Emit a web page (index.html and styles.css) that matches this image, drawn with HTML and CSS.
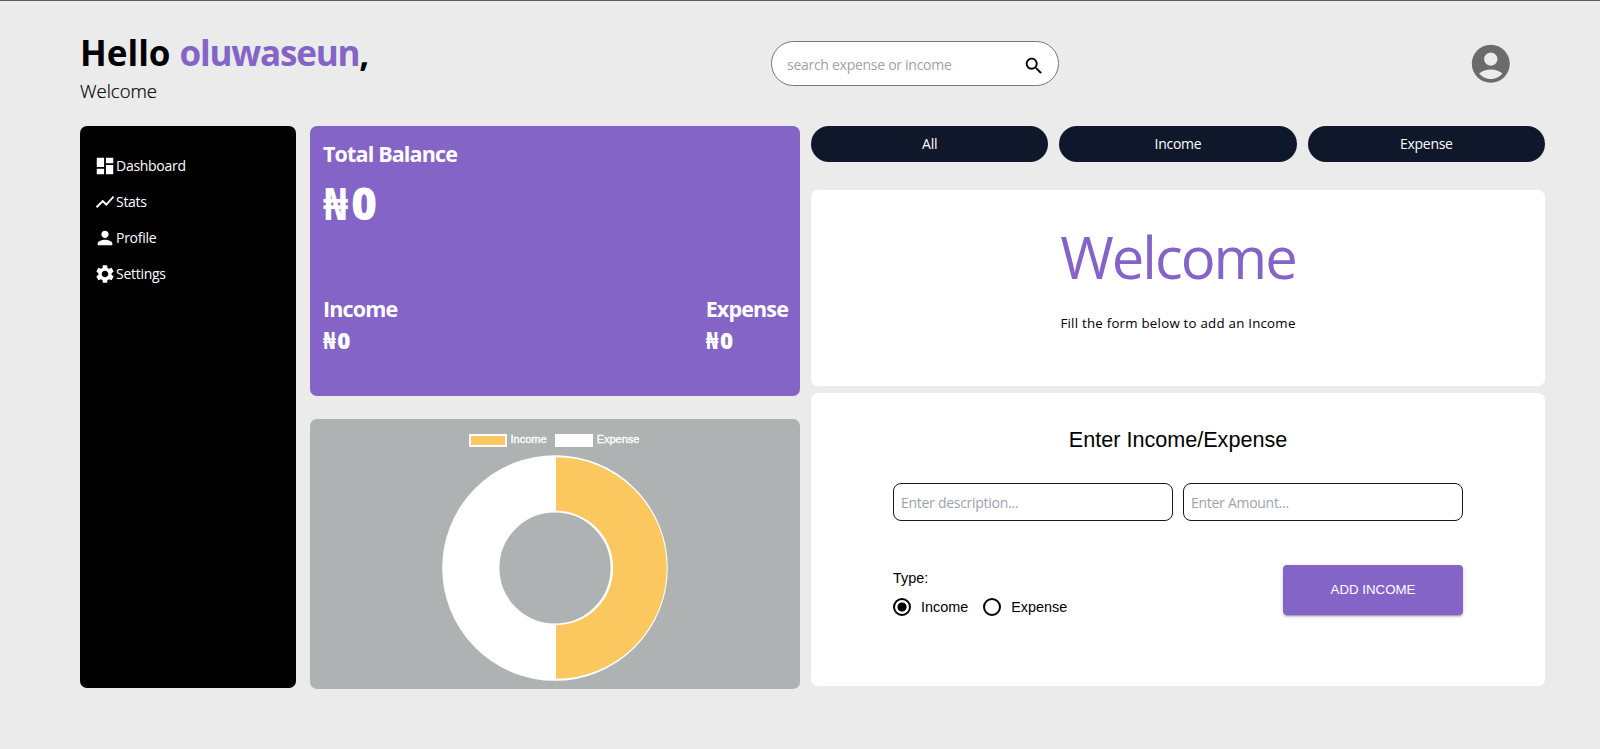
FILE: index.html
```html
<!DOCTYPE html>
<html lang="en">
<head>
<meta charset="utf-8">
<title>Expense Tracker</title>
<link rel="stylesheet" href="styles.css">
</head>
<body>
<div class="page">
  <header class="header">
    <div class="greeting">
      <h1 class="hello">Hello <span class="accent">oluwaseun</span>,</h1>
      <p class="sub">Welcome</p>
    </div>
    <div class="search">
      <span class="search-text">search expense or income</span>
      <svg class="search-icon" viewBox="0 0 24 24"><path d="M15.5 14h-.79l-.28-.27C15.41 12.59 16 11.11 16 9.5 16 5.91 13.09 3 9.5 3S3 5.91 3 9.5 5.91 16 9.5 16c1.61 0 3.09-.59 4.23-1.57l.27.28v.79l5 4.99L20.49 19l-4.99-5zm-6 0C7.01 14 5 11.99 5 9.5S7.01 5 9.5 5 14 7.01 14 9.5 11.99 14 9.5 14z"/></svg>
    </div>
    <svg class="avatar" viewBox="0 0 24 24"><path d="M12 2C6.48 2 2 6.48 2 12s4.48 10 10 10 10-4.48 10-10S17.52 2 12 2zm0 4c1.93 0 3.5 1.57 3.5 3.5S13.93 13 12 13s-3.5-1.57-3.5-3.5S10.07 6 12 6zm0 14c-2.03 0-4.43-.82-6.14-2.88C7.55 15.8 9.68 15 12 15s4.45.8 6.14 2.12C16.43 19.18 14.03 20 12 20z"/></svg>
  </header>
  <main class="main">
    <nav class="sidebar">
      <a class="nav-item"><svg class="nav-icon" viewBox="0 0 24 24"><path d="M3 13h8V3H3v10zm0 8h8v-6H3v6zm10 0h8V11h-8v10zm0-18v6h8V3h-8z"/></svg><span class="nav-text">Dashboard</span></a>
      <a class="nav-item"><svg class="nav-icon" viewBox="0 0 24 24"><path d="m3.5 18.49 6-6.01 4 4L22 6.92l-1.41-1.41-7.09 7.97-4-4L2 16.99z"/></svg><span class="nav-text">Stats</span></a>
      <a class="nav-item"><svg class="nav-icon" viewBox="0 0 24 24"><path d="M12 12c2.21 0 4-1.79 4-4s-1.79-4-4-4-4 1.79-4 4 1.79 4 4 4zm0 2c-2.67 0-8 1.34-8 4v2h16v-2c0-2.66-5.33-4-8-4z"/></svg><span class="nav-text">Profile</span></a>
      <a class="nav-item"><svg class="nav-icon" viewBox="0 0 24 24"><path d="M19.14 12.94c.04-.3.06-.61.06-.94 0-.32-.02-.64-.07-.94l2.03-1.58c.18-.14.23-.41.12-.61l-1.92-3.32c-.12-.22-.37-.29-.59-.22l-2.39.96c-.5-.38-1.03-.7-1.62-.94l-.36-2.54c-.04-.24-.24-.41-.48-.41h-3.84c-.24 0-.43.17-.47.41l-.36 2.54c-.59.24-1.13.57-1.62.94l-2.39-.96c-.22-.08-.47 0-.59.22L2.74 8.87c-.12.21-.08.47.12.61l2.03 1.58c-.05.3-.09.63-.09.94s.02.64.07.94l-2.03 1.58c-.18.14-.23.41-.12.61l1.92 3.32c.12.22.37.29.59.22l2.39-.96c.5.38 1.03.7 1.62.94l.36 2.54c.05.24.24.41.48.41h3.84c.24 0 .44-.17.47-.41l.36-2.54c.59-.24 1.13-.56 1.62-.94l2.39.96c.22.08.47 0 .59-.22l1.92-3.32c.12-.22.07-.47-.12-.61l-2.01-1.58zM12 15.6c-1.98 0-3.6-1.62-3.6-3.6s1.62-3.6 3.6-3.6 3.6 1.62 3.6 3.6-1.62 3.6-3.6 3.6z"/></svg><span class="nav-text">Settings</span></a>
    </nav>
    <section class="overview">
      <div class="balance">
        <h2 class="label">Total Balance</h2>
        <div class="total">₦0</div>
        <div class="split">
          <div><div class="label">Income</div><div class="label naira">₦0</div></div>
          <div><div class="label">Expense</div><div class="label naira">₦0</div></div>
        </div>
      </div>
      <div class="chart">
        <div class="legend">
          <span class="swatch swatch-income"></span><span class="legend-text">Income</span>
          <span class="swatch"></span><span class="legend-text">Expense</span>
        </div>
        <svg class="donut" viewBox="-113 -113 226 226">
          <circle r="84.2" fill="none" stroke="#fff" stroke-width="57.2"/>
          <path d="M1-110.8A110.8 110.8 0 0 1 1 110.8V57.2A57.2 57.2 0 0 0 1-57.2z" fill="#fac85f"/>
        </svg>
      </div>
    </section>
    <section class="entry">
      <div class="tabs">
        <button class="tab">All</button>
        <button class="tab">Income</button>
        <button class="tab">Expense</button>
      </div>
      <div class="welcome">
        <div class="welcome-title">Welcome</div>
        <div class="welcome-text">Fill the form below to add an Income</div>
      </div>
      <form class="form">
        <div class="form-title">Enter Income/Expense</div>
        <div class="fields">
          <div class="field">Enter description...</div>
          <div class="field">Enter Amount...</div>
        </div>
        <div class="form-foot">
          <div>
            <div class="type-label">Type:</div>
            <div class="radios">
              <label class="radio"><i class="dot dot-on"></i>Income</label>
              <label class="radio"><i class="dot"></i>Expense</label>
            </div>
          </div>
          <button type="button" class="add">ADD INCOME</button>
        </div>
      </form>
    </section>
  </main>
</div>
</body>
</html>
```

FILE: styles.css
```css
* { box-sizing: border-box; }

body {
  margin: 0;
  background: #ebebeb;
  color: #000;
  font-family: "Open Sans", "Noto Sans", sans-serif;
  font-size: 14px;
  letter-spacing: -0.28px;
}

h1, h2, p { margin: 0; }

button {
  border: 0;
  padding: 0;
  font: inherit;
  letter-spacing: inherit;
}

.page {
  border-top: 1px solid #5f5a60;
  padding: 32px 55px 0 80px;
}

.header {
  display: flex;
  align-items: flex-start;
  height: 93px;
}

.greeting { width: 691px; }

.hello {
  font-size: 35px;
  line-height: 40px;
  font-weight: 700;
  letter-spacing: 0;
}

.accent {
  color: #8564c7;
  letter-spacing: -1.2px;
}

.sub {
  margin-top: 4px;
  font-size: 18.5px;
  line-height: 28px;
  font-weight: 300;
  letter-spacing: 0;
  -webkit-text-stroke: 0.2px #000;
}

.search {
  display: flex;
  align-items: center;
  justify-content: space-between;
  width: 288px;
  height: 45px;
  margin-top: 8px;
  padding: 2px 13px 0 15px;
  border: 1px solid #777;
  border-radius: 23px;
  background: #fff;
}

.search-text { color: #9ca3af; }

.search-icon {
  width: 22px;
  height: 22px;
  margin-top: 2px;
}

.avatar {
  width: 45.6px;
  height: 45.6px;
  margin: 7.5px 0 0 408.7px;
  fill: #6b6b6b;
}

.main {
  display: flex;
  align-items: flex-start;
}

.sidebar {
  width: 216px;
  height: 562px;
  padding: 22px 14px;
  border-radius: 7px;
  background: #000;
  color: #fff;
}

.nav-item {
  display: flex;
  align-items: center;
  height: 36px;
}

.nav-text { padding-bottom: 2px; }

.nav-icon {
  width: 22px;
  height: 22px;
  fill: #fff;
}

.overview {
  display: flex;
  flex-direction: column;
  gap: 23px;
  width: 490px;
  margin: 0 11px 0 14px;
}

.balance {
  height: 270px;
  padding: 12px 12px 0 13px;
  border-radius: 7px;
  background: #8564c7;
  color: #fff;
}

.label {
  font-size: 21.5px;
  line-height: 32px;
  font-weight: 700;
  letter-spacing: -0.85px;
}

.total {
  margin-top: 3px;
  font-size: 44px;
  line-height: 60px;
  font-weight: 800;
  letter-spacing: 3px;
}

.naira {
  font-size: 22.4px;
  font-weight: 800;
  letter-spacing: 1.5px;
}

.split {
  display: flex;
  justify-content: space-between;
  margin-top: 60px;
}

.chart {
  display: flex;
  flex-direction: column;
  align-items: center;
  height: 270px;
  padding-top: 15px;
  border-radius: 7px;
  background: #aeb2b3;
}

.legend {
  display: flex;
  height: 13px;
  margin-right: 2px;
}

.swatch {
  width: 38px;
  height: 13px;
  border: 2px solid #fff;
  background: #fff;
}

.swatch-income { background: #fac85f; }

.legend-text {
  margin: 0 8px 0 4px;
  color: #fff;
  font-family: "Liberation Sans", sans-serif;
  font-size: 11px;
  line-height: 11px;
  letter-spacing: 0;
  -webkit-text-stroke: 0.35px #fff;
}

.legend-text:last-child { margin-right: 0; }

.donut {
  width: 226px;
  height: 226px;
  margin-top: 8px;
}

.entry { width: 734px; }

.tabs {
  display: grid;
  grid-template-columns: repeat(3, 1fr);
  gap: 11px;
}

.tab {
  height: 36px;
  padding-bottom: 1px;
  border-radius: 18px;
  background: #0f172a;
  color: #fff;
}

.welcome {
  height: 196px;
  margin-top: 28px;
  padding-top: 27px;
  border-radius: 7px;
  background: #fff;
  text-align: center;
}

.welcome-title {
  color: #8564c7;
  font-size: 58px;
  line-height: 80px;
  letter-spacing: -2px;
}

.welcome-text {
  margin-top: 16px;
  font-size: 13.3px;
  line-height: 20px;
  letter-spacing: 0.23px;
}

.form {
  height: 293px;
  margin-top: 7px;
  padding: 32px 82px 0;
  border-radius: 7px;
  background: #fff;
  font-family: "Liberation Sans", sans-serif;
  font-size: 14.4px;
  letter-spacing: 0;
}

.form-title {
  font-size: 21.6px;
  line-height: 30px;
  text-align: center;
}

.fields {
  display: grid;
  grid-template-columns: 1fr 1fr;
  gap: 10px;
  margin-top: 28px;
}

.field {
  display: flex;
  align-items: center;
  height: 38px;
  padding: 0 7px;
  border: 1px solid #0f172a;
  border-radius: 8px;
  color: #9ca3af;
  font-family: "Open Sans", "Noto Sans", sans-serif;
  font-size: 14px;
  letter-spacing: -0.28px;
}

.form-foot {
  display: flex;
  justify-content: space-between;
  margin-top: 44px;
}

.type-label {
  margin-top: 3px;
  line-height: 20px;
}

.radios {
  display: flex;
  gap: 15px;
  margin-top: 9px;
}

.radio {
  display: flex;
  align-items: center;
  height: 20px;
}

.dot {
  width: 18px;
  height: 18px;
  margin-right: 10px;
  border: 2px solid #000;
  border-radius: 50%;
}

.dot-on { background: radial-gradient(circle, #000 4.2px, transparent 4.9px); }

.add {
  width: 180px;
  height: 50px;
  padding-bottom: 2px;
  border-radius: 4px;
  background: #8564c7;
  color: #fff;
  font-size: 13.3px;
  box-shadow: 0 3px 1px -2px rgba(0,0,0,.2), 0 2px 2px rgba(0,0,0,.14), 0 1px 5px rgba(0,0,0,.12);
}
```
